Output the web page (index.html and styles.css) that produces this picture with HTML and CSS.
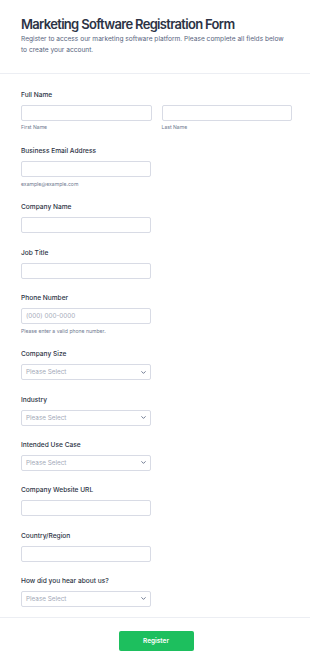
FILE: index.html
```html
<!DOCTYPE html>
<html lang="en">
<head>
<meta charset="utf-8">
<title>Marketing Software Registration Form</title>
<link rel="stylesheet" href="styles.css">
</head>
<body>
<main class="form">
  <header class="head">
    <h1 class="title">Marketing Software Registration Form</h1>
    <p class="desc">Register to access our marketing software platform. Please complete all fields below to create your account.</p>
  </header>

  <section class="fields">
    <div class="field">
      <label class="label">Full Name</label>
      <div class="pair">
        <div class="col">
          <input class="input" type="text">
          <span class="hint">First Name</span>
        </div>
        <div class="col">
          <input class="input" type="text">
          <span class="hint">Last Name</span>
        </div>
      </div>
    </div>

    <div class="field">
      <label class="label">Business Email Address</label>
      <input class="input" type="email">
      <span class="hint">example@example.com</span>
    </div>

    <div class="field">
      <label class="label">Company Name</label>
      <input class="input" type="text">
    </div>

    <div class="field">
      <label class="label">Job Title</label>
      <input class="input" type="text">
    </div>

    <div class="field">
      <label class="label">Phone Number</label>
      <input class="input" type="tel" placeholder="(000) 000-0000">
      <span class="hint">Please enter a valid phone number.</span>
    </div>

    <div class="field">
      <label class="label">Company Size</label>
      <div class="select"><span class="ph">Please Select</span><svg class="chev" viewBox="0 0 8 5" width="5" height="3"><path d="M1 1l3 3 3-3" fill="none" stroke="#57647e" stroke-width="1.4" stroke-linecap="round" stroke-linejoin="round"/></svg></div>
    </div>

    <div class="field">
      <label class="label">Industry</label>
      <div class="select"><span class="ph">Please Select</span><svg class="chev" viewBox="0 0 8 5" width="5" height="3"><path d="M1 1l3 3 3-3" fill="none" stroke="#57647e" stroke-width="1.4" stroke-linecap="round" stroke-linejoin="round"/></svg></div>
    </div>

    <div class="field">
      <label class="label">Intended Use Case</label>
      <div class="select"><span class="ph">Please Select</span><svg class="chev" viewBox="0 0 8 5" width="5" height="3"><path d="M1 1l3 3 3-3" fill="none" stroke="#57647e" stroke-width="1.4" stroke-linecap="round" stroke-linejoin="round"/></svg></div>
    </div>

    <div class="field">
      <label class="label">Company Website URL</label>
      <input class="input" type="url">
    </div>

    <div class="field">
      <label class="label">Country/Region</label>
      <input class="input" type="text">
    </div>

    <div class="field">
      <label class="label">How did you hear about us?</label>
      <div class="select"><span class="ph">Please Select</span><svg class="chev" viewBox="0 0 8 5" width="5" height="3"><path d="M1 1l3 3 3-3" fill="none" stroke="#57647e" stroke-width="1.4" stroke-linecap="round" stroke-linejoin="round"/></svg></div>
    </div>
  </section>

  <footer class="foot">
    <button class="btn" type="button">Register</button>
  </footer>
</main>
</body>
</html>
```

FILE: styles.css
```css
* { box-sizing: border-box; }

html, body {
  margin: 0;
  padding: 0;
  background: #ffffff;
}

body {
  font-family: Inter, "Noto Sans", "Liberation Sans", sans-serif;
  color: #2c3345;
}

.form {
  width: 310px;
}

.head {
  padding: 14.5px 19px 17px 21px;
  border-bottom: 1px solid #eceef3;
}

.title {
  margin: 0;
  font-size: 13px;
  line-height: 19px;
  font-weight: 600;
  letter-spacing: -0.68px;
  color: #2c3345;
  white-space: nowrap;
}

.desc {
  margin: 0.7px 0 0;
  font-size: 6.6px;
  line-height: 10.7px;
  color: #57647e;
}

.fields {
  padding: 16.3px 18px 10.3px 21px;
  border-bottom: 1px solid #eceef3;
  display: flex;
  flex-direction: column;
  gap: 14.3px;
}

.field {
  display: flex;
  flex-direction: column;
  align-items: flex-start;
}

.label {
  font-size: 6.6px;
  line-height: 10px;
  font-weight: 500;
  color: #2c3345;
  margin-bottom: 5px;
}

.pair {
  display: grid;
  grid-template-columns: 130.5px 130.5px;
  column-gap: 10px;
}

.col {
  display: flex;
  flex-direction: column;
}

.input,
.select {
  width: 130px;
  height: 16px;
  margin: 0;
  border: 1px solid #d8dbe5;
  border-radius: 2px;
  background: #ffffff;
  font-family: inherit;
  font-size: 6.35px;
  color: #2c3345;
  padding: 0 4px;
  outline: none;
}

.pair .input { width: 130.5px; }

.input::placeholder {
  color: #a3a9b8;
  opacity: 1;
}

.select {
  display: flex;
  align-items: center;
  justify-content: space-between;
  padding: 0 4px 0 4px;
}

.ph {
  font-size: 6.35px;
  color: #a3a9b8;
}

.chev {
  display: block;
}

.hint {
  margin-top: 3.5px;
  font-size: 5.1px;
  line-height: 7.5px;
  color: #6f7a90;
}

.foot {
  display: flex;
  justify-content: center;
  padding: 12.5px 0 17px;
}

.btn {
  width: 75px;
  height: 20px;
  margin-left: 2px;
  border: 0;
  border-radius: 2px;
  background: #1dbf5e;
  color: #ffffff;
  font-family: inherit;
  font-size: 6.5px;
  font-weight: 600;
  cursor: pointer;
}
```
